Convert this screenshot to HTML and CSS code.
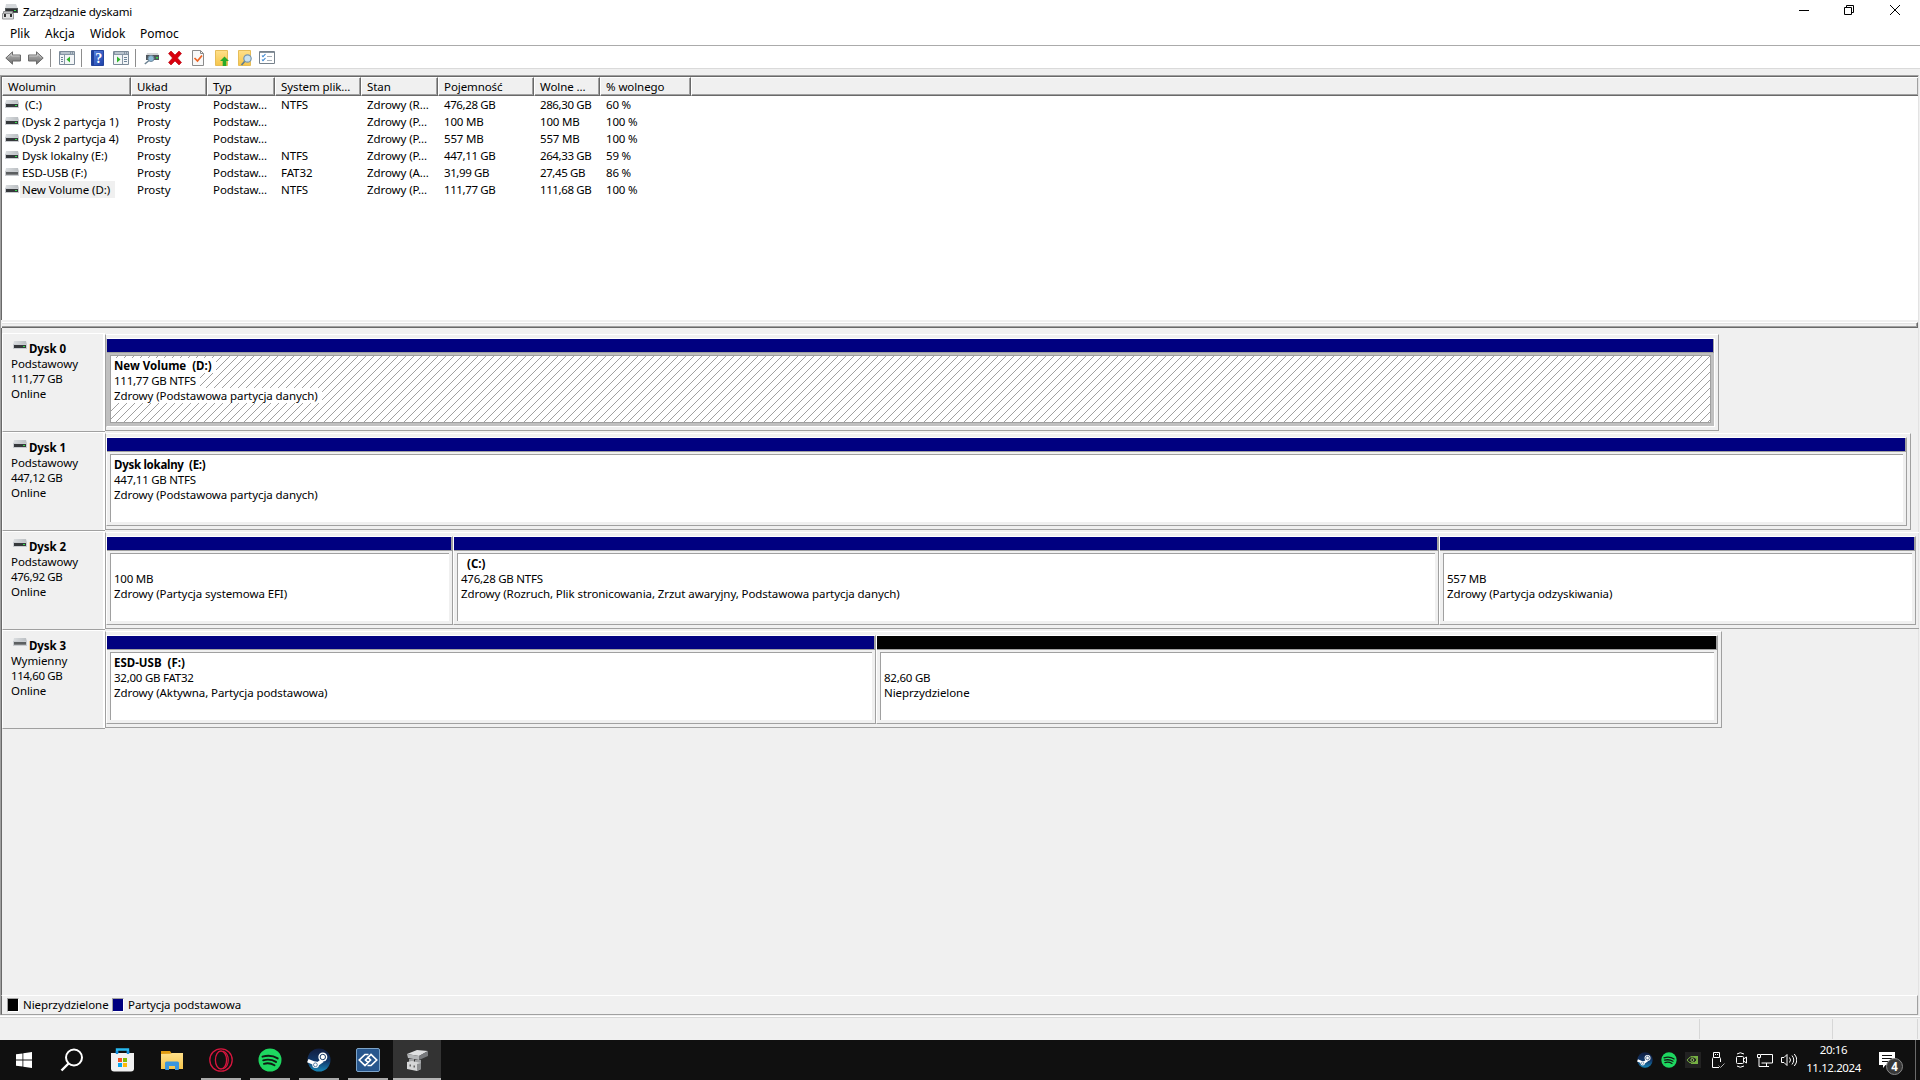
FILE: index.html
```html
<!DOCTYPE html>
<html lang="pl">
<head>
<meta charset="utf-8">
<title>Zarządzanie dyskami</title>
<link rel="stylesheet" href="styles.css">
</head>
<body>
<svg class="defs" width="0" height="0">
  <defs>
    <linearGradient id="gSteam" x1="0" y1="0" x2="0" y2="1"><stop offset="0" stop-color="#111d3f"/><stop offset=".55" stop-color="#11386a"/><stop offset="1" stop-color="#1787b8"/></linearGradient>
    <linearGradient id="gTop" x1="0" y1="0" x2="1" y2="0"><stop offset="0" stop-color="#dcdfe1"/><stop offset="1" stop-color="#b9bdc1"/></linearGradient>
    <linearGradient id="gArrow" x1="0" y1="0" x2="0" y2="1"><stop offset="0" stop-color="#b5b5b5"/><stop offset=".5" stop-color="#969696"/><stop offset="1" stop-color="#6e6e6e"/></linearGradient>
    <linearGradient id="gHelp" x1="0" y1="0" x2="1" y2="1"><stop offset="0" stop-color="#5b86e2"/><stop offset="1" stop-color="#1c3fa8"/></linearGradient>
    <linearGradient id="gFolder" x1="0" y1="0" x2="0" y2="1"><stop offset="0" stop-color="#ffe08a"/><stop offset="1" stop-color="#f6c54a"/></linearGradient>
  </defs>
  <symbol id="drive" viewBox="0 0 14 8"><path d="M1 0h12l1 4H0z" fill="url(#gTop)"/><path d="M0 3h14v5H0z" fill="#c9ccd0"/><path d="M1 4h12v3H1z" fill="#36393c"/><path d="M10 5h2v1h-2z" fill="#35e04d"/></symbol>
  <symbol id="usbdrive" viewBox="0 0 14 8"><path d="M1 0h12l1 4H0z" fill="url(#gTop)"/><path d="M0 3h14v5H0z" fill="#c9ccd0"/><path d="M1 4h12v3H1z" fill="#5c5f61"/><path d="M1 6h12v1H1z" fill="#7e8082"/></symbol>
  <symbol id="arrow" viewBox="0 0 16 14"><path d="M.8 7 7.5.8V4h8v6h-8v3.2z" fill="url(#gArrow)" stroke="#6b6b6b" stroke-linejoin="round"/><path d="M2.6 6.7 6.6 3v2h8" fill="none" stroke="#d0d0d0" stroke-width=".8"/></symbol>
  <symbol id="steam" viewBox="0 0 24 24"><circle cx="12" cy="12" r="11.5" fill="url(#gSteam)"/><path d="M.8 12.6 10 16.5l5.5-4" fill="none" stroke="#fff" stroke-width="3.6"/><circle cx="8.6" cy="16.8" r="3.3" fill="#fff"/><circle cx="8.4" cy="16.8" r="1.9" fill="none" stroke="#1a4e80" stroke-width=".7"/><circle cx="15.8" cy="9" r="4.5" fill="#fff"/><circle cx="15.8" cy="9" r="2.7" fill="none" stroke="#173b68" stroke-width="1"/></symbol>
  <symbol id="spotify" viewBox="0 0 24 24"><circle cx="12" cy="12" r="11.5" fill="#1ed760"/><path d="M4.5 8.7c5-1.5 11-.9 15.2 1.7M5.2 12.3c4.4-1.2 9-.7 12.8 1.6M5.9 15.8c3.7-.9 7.4-.5 10.6 1.4" fill="none" stroke="#101a13" stroke-width="1.9" stroke-linecap="round"/></symbol>
</svg>

<header class="titlebar">
  <svg class="app-icon" width="16" height="16" viewBox="0 0 16 16"><path d="M4 0h10l2 5H3z" fill="#d4d7da"/><path d="M3 4h13v5H3z" fill="#55595c"/><path d="M4 5h11v3H4z" fill="#303335"/><path d="M12 6h2v1h-2z" fill="#38df50"/><path d="M1.500 7.500h9V10.500h-9z" fill="#c5c6c8" stroke="#8c8e90"/><path d="M.5 9.500h11v5.500H.5z" fill="#e1e2e3" stroke="#97999b"/><path d="M2 10h2v3H2zM8 10h2v3H8z" fill="#303030"/></svg>
  <span class="title">Zarządzanie dyskami</span>
  <div class="window-buttons">
    <svg width="10" height="10" viewBox="0 0 10 10"><path d="M0 5.500h10" stroke="#000"/></svg>
    <svg width="10" height="10" viewBox="0 0 10 10" fill="none" stroke="#000"><path d="M.5 2.500h7v7h-7zM2.500 2.500v-2h7v7h-2"/></svg>
    <svg width="10" height="10" viewBox="0 0 10 10"><path d="m0 0 10 10M10 0 0 10" stroke="#000"/></svg>
  </div>
</header>
<nav class="menu"><span>Plik</span><span>Akcja</span><span>Widok</span><span>Pomoc</span></nav>

<div class="toolbar">
  <svg width="16" height="14"><use href="#arrow"/></svg>
  <svg class="flip" width="16" height="14"><use href="#arrow"/></svg>
  <i class="sep"></i>
  <svg width="16" height="14" viewBox="0 0 16 14"><path d="M.5.5h15v13H.5z" fill="#f4f6f8" stroke="#7c8a98"/><path d="M1 1h14v3H1z" fill="#8796a5"/><path d="M2 2h9M12 2h1M14 2h1" stroke="#e9eef3"/><path d="M5.500 4v9" stroke="#8796a5"/><path d="M2 6.500h2M2 8.500h2M2 10.500h2" stroke="#6d8499"/><path d="M11 5.500v6L7.500 8.500z" fill="#2fb52a"/></svg>
  <i class="sep"></i>
  <svg width="16" height="16" viewBox="0 0 16 16"><path d="M1.500.5h12v15h-12z" fill="url(#gHelp)" stroke="#23439c"/><path d="M2 1h2v14H2z" fill="#1d3f9c"/><text x="8.700" y="13.200" text-anchor="middle" class="help-mark">?</text></svg>
  <svg width="16" height="14" viewBox="0 0 16 14"><path d="M.5.5h15v13H.5z" fill="#f4f6f8" stroke="#7c8a98"/><path d="M1 1h14v3H1z" fill="#8796a5"/><path d="M2 2h9M12 2h1M14 2h1" stroke="#e9eef3"/><path d="M9.500 4v9" stroke="#8796a5"/><path d="M11 6.500h3M11 8.500h3M11 10.500h3" stroke="#6d8499"/><path d="M4 5.500v6l3.500-3z" fill="#2fb52a"/></svg>
  <i class="sep"></i>
  <svg width="16" height="14" viewBox="0 0 16 14"><path d="M3 2h11l1 3H2z" fill="#d1d4d7"/><path d="M2 4h13v5H2z" fill="#51575c"/><path d="M12 6h2v1.500h-2z" fill="#33dc48"/><path d="M5 9.500.8 13" stroke="#6c8191" stroke-width="1.500"/><circle cx="7" cy="7.500" r="3" fill="#8cbbd8" stroke="#70899c"/></svg>
  <svg width="16" height="16" viewBox="0 0 16 16"><path d="m1.500 3.500 2.500-2.500L8 5l4-4 2.500 2.500-4 4.500 4 4.500L12 15l-4-4-4 4-2.500-2.500 4-4.500z" fill="#d9000d" stroke="#b3000b" stroke-width=".6"/></svg>
  <svg width="16" height="16" viewBox="0 0 16 16"><path d="M2.500.5h8l3 3v12h-11z" fill="#f8f8f8" stroke="#8b8b8b"/><path d="M10.500.5v3h3" fill="none" stroke="#8b8b8b"/><path d="m4.500 8 3 3L12 5.500" fill="none" stroke="#ed6424" stroke-width="1.700"/></svg>
  <svg width="16" height="16" viewBox="0 0 16 16"><path d="M2.500.5h12v15h-12z" fill="url(#gFolder)" stroke="#e6bd58"/><path d="M11.500 6.500 16 11h-2.700v5h-3.600v-5H7z" fill="#28aa28"/></svg>
  <svg width="16" height="16" viewBox="0 0 16 16"><path d="M2.500.5h12v15h-12z" fill="url(#gFolder)" stroke="#e6bd58"/><path d="m9 11-3.500 4" stroke="#5b7b91" stroke-width="1.700"/><circle cx="11.500" cy="8.500" r="3.700" fill="#c9e2f0" stroke="#7896ab" stroke-width="1.200"/></svg>
  <svg width="16" height="13" viewBox="0 0 16 13"><path d="M.5.5h15v12H.5z" fill="#fff" stroke="#76818b"/><path d="M1 1h14v1H1z" fill="#8b959e"/><path d="m3 4.500 1 1.200L6.500 3M3 8.500l1 1.200L6.500 7" fill="none" stroke="#3984cf" stroke-width="1.100"/><path d="M8 5.500h5M8 9.500h5" stroke="#a7b0b8"/></svg>
</div>

<main class="pane">
  <section class="volumes">
    <div class="list-row list-head"><span>Wolumin</span><span>Układ</span><span>Typ</span><span>System plik...</span><span>Stan</span><span>Pojemność</span><span>Wolne ...</span><span>% wolnego</span><span></span></div>
    <div class="list-row"><span><svg width="14" height="8"><use href="#drive"/></svg><b class="name lead">(C:)</b></span><span>Prosty</span><span>Podstaw...</span><span>NTFS</span><span>Zdrowy (R...</span><span class="num">476,28 GB</span><span class="num">286,30 GB</span><span class="pct">60 %</span></div>
    <div class="list-row"><span><svg width="14" height="8"><use href="#drive"/></svg><b class="name">(Dysk 2 partycja 1)</b></span><span>Prosty</span><span>Podstaw...</span><span></span><span>Zdrowy (P...</span><span class="pct">100 MB</span><span class="pct">100 MB</span><span class="pct">100 %</span></div>
    <div class="list-row"><span><svg width="14" height="8"><use href="#drive"/></svg><b class="name">(Dysk 2 partycja 4)</b></span><span>Prosty</span><span>Podstaw...</span><span></span><span>Zdrowy (P...</span><span class="pct">557 MB</span><span class="pct">557 MB</span><span class="pct">100 %</span></div>
    <div class="list-row"><span><svg width="14" height="8"><use href="#drive"/></svg><b class="name">Dysk lokalny (E:)</b></span><span>Prosty</span><span>Podstaw...</span><span>NTFS</span><span>Zdrowy (P...</span><span class="num">447,11 GB</span><span class="num">264,33 GB</span><span class="pct">59 %</span></div>
    <div class="list-row"><span><svg width="14" height="8"><use href="#usbdrive"/></svg><b class="name">ESD-USB (F:)</b></span><span>Prosty</span><span>Podstaw...</span><span>FAT32</span><span>Zdrowy (A...</span><span class="num">31,99 GB</span><span class="num">27,45 GB</span><span class="pct">86 %</span></div>
    <div class="list-row"><span><svg width="14" height="8"><use href="#drive"/></svg><b class="name picked">New Volume (D:)</b></span><span>Prosty</span><span>Podstaw...</span><span>NTFS</span><span>Zdrowy (P...</span><span class="num">111,77 GB</span><span class="num">111,68 GB</span><span class="pct">100 %</span></div>
  </section>
  <div class="splitter"></div>

  <section class="disks">
    <div class="disk">
      <div class="disk-label"><p class="disk-name"><svg width="14" height="8"><use href="#drive"/></svg>Dysk 0</p><p>Podstawowy</p><p class="num">111,77 GB</p><p>Online</p></div>
      <div class="track">
        <div class="vol selected" style="width:1609px"><div class="bar"></div><div class="body"><p class="vol-name"><span>New Volume&nbsp; (D:)</span></p><p class="size"><span>111,77 GB NTFS</span></p><p><span>Zdrowy (Podstawowa partycja danych)</span></p></div></div>
      </div>
    </div>
    <div class="disk">
      <div class="disk-label"><p class="disk-name"><svg width="14" height="8"><use href="#drive"/></svg>Dysk 1</p><p>Podstawowy</p><p class="num">447,12 GB</p><p>Online</p></div>
      <div class="track">
        <div class="vol" style="width:1801px"><div class="bar"></div><div class="body"><p class="vol-name tight">Dysk lokalny&nbsp; (E:)</p><p class="size">447,11 GB NTFS</p><p>Zdrowy (Podstawowa partycja danych)</p></div></div>
      </div>
    </div>
    <div class="disk">
      <div class="disk-label"><p class="disk-name"><svg width="14" height="8"><use href="#drive"/></svg>Dysk 2</p><p>Podstawowy</p><p class="num">476,92 GB</p><p>Online</p></div>
      <div class="track full">
        <div class="vol" style="width:347px"><div class="bar"></div><div class="body"><p class="vol-name"></p><p class="size">100 MB</p><p>Zdrowy (Partycja systemowa EFI)</p></div></div>
        <div class="vol" style="width:986px"><div class="bar"></div><div class="body"><p class="vol-name">&nbsp; (C:)</p><p class="size">476,28 GB NTFS</p><p>Zdrowy (Rozruch, Plik stronicowania, Zrzut awaryjny, Podstawowa partycja danych)</p></div></div>
        <div class="vol" style="width:477px"><div class="bar"></div><div class="body"><p class="vol-name"></p><p class="size">557 MB</p><p>Zdrowy (Partycja odzyskiwania)</p></div></div>
      </div>
    </div>
    <div class="disk">
      <div class="disk-label"><p class="disk-name"><svg width="14" height="8"><use href="#usbdrive"/></svg>Dysk 3</p><p>Wymienny</p><p class="num">114,60 GB</p><p>Online</p></div>
      <div class="track">
        <div class="vol" style="width:770px"><div class="bar"></div><div class="body"><p class="vol-name">ESD-USB&nbsp; (F:)</p><p class="size">32,00 GB FAT32</p><p>Zdrowy (Aktywna, Partycja podstawowa)</p></div></div>
        <div class="vol free" style="width:842px"><div class="bar"></div><div class="body"><p class="vol-name"></p><p class="size">82,60 GB</p><p>Nieprzydzielone</p></div></div>
      </div>
    </div>
  </section>
  <footer class="legend"><i class="swatch black"></i><span class="legend-free">Nieprzydzielone</span><i class="swatch"></i><span>Partycja podstawowa</span></footer>
</main>
<div class="statusbar"><i></i><i></i><i></i></div>

<div class="taskbar">
  <div class="task"><svg width="16" height="16" viewBox="0 0 16 16"><path d="M0 2.300 6.500 1.400V7.600H0zM7.300 1.300 16 0v7.600H7.300zM0 8.400h6.500v6.200L0 13.700zM7.300 8.400H16V16l-8.700-1.200z" fill="#fff"/></svg></div>
  <div class="task"><svg width="24" height="24" viewBox="0 0 24 24" fill="none" stroke="#fff"><circle cx="14" cy="9.500" r="8" stroke-width="2"/><path d="M8.500 15.500 1.500 22.500" stroke-width="2.400"/></svg></div>
  <div class="task"><svg width="24" height="24" viewBox="0 0 24 24"><path d="M7 8V1.500h11V8" fill="none" stroke="#27b9f0" stroke-width="2.400"/><path d="M1 5h23v15.500a3 3 0 0 1-3 3H4a3 3 0 0 1-3-3z" fill="#f1f1f1"/><path d="M7 3v3M18 3v3" stroke="#1490df" stroke-width="2.400"/><path d="M8 10h4v4H8z" fill="#f35325"/><path d="M13 10h4v4h-4z" fill="#81bc06"/><path d="M8 15h4v4H8z" fill="#05a6f0"/><path d="M13 15h4v4h-4z" fill="#ffba08"/></svg></div>
  <div class="task"><svg width="24" height="24" viewBox="0 0 24 24"><path d="M1 3h9l2 3v6H1z" fill="#e09b10"/><path d="M1 6l9-.2L12 5h11v16H1z" fill="url(#gFolder)"/><path d="M5 21v-6q0-1.500 1.500-1.500h11Q19 13.500 19 15v6q0 1-1 1h-3v-4h-6v4H6q-1 0-1-1z" fill="#3a96dd"/></svg></div>
  <div class="task run"><svg width="24" height="24" viewBox="0 0 24 24" fill="none" stroke="#d6163e"><circle cx="12" cy="12" r="11.200" stroke-width="1.300"/><ellipse cx="12" cy="12" rx="5.600" ry="9" stroke-width="1.300"/><path d="M14 3c7 3 7 15 0 18" stroke-width="1.200"/></svg></div>
  <div class="task run"><svg width="24" height="24"><use href="#spotify"/></svg></div>
  <div class="task run"><svg width="24" height="24"><use href="#steam"/></svg></div>
  <div class="task run"><svg width="24" height="24" viewBox="0 0 24 24"><rect x=".5" y=".5" width="23" height="23" rx="1.500" fill="#27568d" stroke="#7da4c9"/><g fill="none" stroke="#fff" stroke-width="1.700"><path d="M12.500 6.500H9L3.300 12l5.700 5.500 5.500-5.500-2.500-2.500L9.500 12l3 3"/><path d="M11.500 17.500H15l5.700-5.500L15 6.500 11.500 10"/></g></svg></div>
  <div class="task run active"><svg width="24" height="24" viewBox="0 0 24 24"><path d="M2 6 12 2l11 1-9 5z" fill="#dfe0e1"/><path d="m2 6 12 2v4L3 10z" fill="#b4b6b8"/><path d="m14 8 9-5v5l-9 4z" fill="#77797c"/><path d="M4 11h5v3H4zM10 12h6v3h-6z" fill="#9fa1a3"/><path d="m2 14 5-1 9 2v6l-4 2-10-2z" fill="#d5d6d7"/><path d="m12 16 4-1v6l-4 2z" fill="#8e9092"/><path d="M4.500 16.500H6v2H4.500zM8.500 17.500H10v2H8.500z" fill="#666"/></svg></div>

  <div class="tray">
    <svg width="16" height="16"><use href="#steam"/></svg>
    <svg width="16" height="16"><use href="#spotify"/></svg>
    <svg width="16" height="16" viewBox="0 0 16 16"><path d="M0 0h16v16H0z" fill="#222"/><path d="M6 4h7v8H6z" fill="#76b043"/><path d="M2 8q3-4.500 7-3 2 1 3 3-2 3-5 3-3.500 0-5-3z" fill="#222" stroke="#76b043"/><circle cx="7.300" cy="8" r="1.500" fill="none" stroke="#91c45d"/></svg>
    <svg width="16" height="16" viewBox="0 0 16 16" fill="none" stroke="#fff"><path d="M4.500 5V.5h6V5M6 2.500h1M8 2.500h1M10 15.500H3.500v-9q0-1 1-1h6q1 0 1 1V10"/><path d="m9.500 13.500 2 2 4-4" stroke="#aaa"/></svg>
    <svg width="16" height="16" viewBox="0 0 16 16" fill="none" stroke="#fff"><path d="M4.500 4.500h5q1 0 1 1v5q0 1-1 1h-5q-1 0-1-1v-5q0-1 1-1zM10.500 7l3-2v6l-3-2M4 2q3-2.500 7 0M4 14q3 2.500 7 0"/></svg>
    <svg width="16" height="16" viewBox="0 0 16 16" fill="none" stroke="#fff"><path d="M4 2.500h11.500v8.500H4.500M.5 2.500h3v3h-3zM2 6v8.500h10M9.500 11v3.500"/></svg>
    <svg width="16" height="16" viewBox="0 0 16 16" fill="none" stroke="#fff"><path d="M.5 5.500H3l3-3v11l-3-3H.5zM8.500 5.500q2 2.500 0 5M11 3.500q3.500 4.500 0 9M13.300 2q5 6 0 12"/></svg>
  </div>
  <div class="clock"><span>20:16</span><span>11.12.2024</span></div>
  <div class="notify"><svg width="16" height="16" viewBox="0 0 16 16"><path d="M0 0h16v13H6.500L4 16v-3H0z" fill="#fff"/><path d="M3 3.500h10M3 6.500h10M3 9.500h7" stroke="#101010"/></svg><span class="badge">4</span></div>
  <i class="show-desktop"></i>
</div>
</body>
</html>
```
FILE: styles.css
```css
* { box-sizing: border-box; }

body {
  margin: 0;
  width: 1920px;
  height: 1080px;
  overflow: hidden;
  display: flex;
  flex-direction: column;
  background: #f0f0f0;
  color: #000;
  font: 11.5px/15px "Noto Sans", "Open Sans", sans-serif;
  letter-spacing: -0.08px;
  white-space: nowrap;
}

p { margin: 0; height: 15px; }
svg { display: block; flex: none; }

/* Title and menu */
.titlebar { display: flex; height: 22px; padding-left: 2px; background: #fff; flex: none; }
.app-icon { margin-top: 4px; }
.title { margin: 4px 0 0 5px; letter-spacing: -0.2px; }
.window-buttons { display: grid; grid-template-columns: 45px 46px 10px; margin: 5px 20px 0 auto; }
.menu {
  display: grid;
  grid-template-columns: 35px 45px 50px auto;
  height: 23px;
  padding: 4px 0 0 10px;
  background: #fff;
  font-size: 12px;
  letter-spacing: 0;
  flex: none;
}

.toolbar {
  display: flex;
  align-items: center;
  gap: 7px;
  height: 24px;
  padding: 1px 0 0 5px;
  background: #fff;
  border-top: 1px solid #ababab;
  border-bottom: 1px solid #dadada;
  flex: none;
}
.sep { width: 1px; height: 18px; margin: 0 1px 0 -1px; background: #8d8d8d; }
.flip { transform: scaleX(-1); }
.help-mark { font: bold 14px "Liberation Serif", serif; fill: #fff; }

/* Main pane */
.pane {
  display: flex;
  flex-direction: column;
  width: 1919px;
  height: 940px;
  margin-top: 6px;
  border-left: 1px solid #a0a0a0;
  border-top: 1px solid #a0a0a0;
  border-right: 1px solid #e3e3e3;
  flex: none;
}
.volumes {
  height: 244px;
  background: #fff;
  border-left: 1px solid #696969;
  border-top: 1px solid #696969;
  flex: none;
}
.list-row {
  display: grid;
  grid-template-columns: 129px 76px 68px 86px 77px 96px 66px 91px 1fr;
  height: 17px;
  line-height: 17px;
}
.list-row > span { display: flex; align-items: center; padding-left: 6px; }
.list-row:not(.list-head) > span:first-child { padding-left: 3px; }
.list-row svg { margin: -1px 1px 0 0; }
.num { letter-spacing: -0.4px; }
.pct { letter-spacing: -0.2px; }
.size { letter-spacing: -0.25px; }
.list-head { height: 19px; }
.list-head > span {
  background: #f0f0f0;
  border-top: 1px solid #fff;
  border-left: 1px solid #fff;
  border-right: 1px solid #696969;
  border-bottom: 1px solid #696969;
  box-shadow: inset -1px -1px #a0a0a0;
  padding-left: 5px;
}
.list-head > span:last-child { border-right: 0; }
.name { font-weight: normal; padding: 0 5px 0 2px; }
.lead { padding-left: 5px; }
.picked { background: #f0f0f0; }

.splitter {
  height: 6px;
  margin: 2px 0 0 1px;
  border-top: 1px solid #fff;
  border-right: 1px solid #696969;
  border-bottom: 1px solid #696969;
  box-shadow: inset -1px -1px #a0a0a0, inset 0 1px #e3e3e3;
  flex: none;
}

/* Disk rows */
.disks { flex: 1; padding-top: 5px; border-left: 1px solid #696969; }
.disk { display: flex; height: 99px; }
.disk-label {
  width: 103px;
  padding: 7px 0 0 8px;
  border-top: 1px solid #fff;
  border-left: 1px solid #fff;
  border-bottom: 1px solid #a0a0a0;
  box-shadow: inset -2px 0 #fff;
  flex: none;
}
.disk-name { display: flex; gap: 2px; padding-left: 2px; font-weight: bold; }
.track {
  display: flex;
  height: 97px;
  margin-top: 1px;
  padding: 3px 3px 0 0;
  border-top: 1px solid #fff;
  border-left: 1px solid #a0a0a0;
  border-right: 1px solid #a0a0a0;
  border-bottom: 1px solid #a0a0a0;
}
.track.full { flex: 1; border-right: 0; }
.vol {
  display: flex;
  flex-direction: column;
  height: 89px;
  border-top: 1px solid #fff;
  border-left: 1px solid #fff;
  border-right: 1px solid #a0a0a0;
  border-bottom: 1px solid #a0a0a0;
  flex: none;
}
.bar { height: 14px; background: #000080; border-right: 1px solid #a0a0a0; border-bottom: 1px solid #a0a0a0; }
.free .bar { background: #000; }
.body {
  flex: 1;
  margin: 2px 3px 3px;
  padding: 2px 0 0 3px;
  background: #fff;
  border-top: 1px solid #a0a0a0;
  border-left: 1px solid #a0a0a0;
}
.vol-name { font-weight: bold; letter-spacing: 0; }
.tight { letter-spacing: -0.28px; }
.selected { background: #c0c0c0; border-right-color: #fff; border-bottom-color: #fff; border-left-color: #c0c0c0; }
/* Diagonal hatch: one pixel per row of an 8x8 tile */
.selected .body {
  padding-left: 0;
  border: 1px solid #a0a0a0;
  background: #fff url("data:image/svg+xml,%3Csvg xmlns='http://www.w3.org/2000/svg' width='8' height='8'%3E%3Cpath fill='%23a0a0a0' d='M6 0h1v1H6zM5 1h1v1H5zM4 2h1v1H4zM3 3h1v1H3zM2 4h1v1H2zM1 5h1v1H1zM0 6h1v1H0zM7 7h1v1H7z'/%3E%3C/svg%3E");
}
.selected p span { display: inline-block; height: 15px; padding: 0 4px 0 3px; background: #fff; }

.legend {
  display: flex;
  height: 20px;
  padding: 2px 0 0 5px;
  border-left: 1px solid #696969;
  border-top: 1px solid #fff;
  border-right: 1px solid #a0a0a0;
  border-bottom: 1px solid #a0a0a0;
  line-height: 13px;
  flex: none;
}
.swatch { width: 12px; height: 14px; margin-right: 4px; background: #000080; border: 1px solid #a0a0a0; border-right-color: #fff; border-bottom-color: #fff; }
.swatch.black { background: #000; }
.legend-free { width: 85px; margin-right: 4px; }

.statusbar {
  display: flex;
  justify-content: flex-end;
  height: 24px;
  margin-top: 1px;
  padding: 1px 2px 1px 0;
  border-top: 1px solid #fff;
  box-shadow: inset 0 1px #d7d7d7;
  flex: none;
}
.statusbar i { margin-top: 1px; border-right: 1px solid #d7d7d7; width: 85px; }
.statusbar i:nth-child(2) { width: 133px; }

/* Taskbar */
.taskbar { display: flex; height: 40px; background: #101010; color: #fff; flex: none; }
.task { width: 48px; margin-right: 1px; display: flex; align-items: center; justify-content: center; }
.task:nth-child(1) { margin-right: 0; }
.task:nth-child(2), .task:nth-child(3) { margin-right: 2px; }
.run { box-shadow: inset 4px 0 #101010, inset -4px 0 #101010, inset 0 -2px #aaa; }
.run.active { background: #333; box-shadow: inset 0 -2px #b5b5b5; margin-right: 0; }
.tray { display: flex; align-items: center; gap: 8px; margin-left: auto; }
.clock {
  display: flex;
  flex-direction: column;
  align-items: center;
  width: 74px;
  padding: 1px 1px 0 0;
  line-height: 18px;
  letter-spacing: -0.42px;
}
.notify { position: relative; width: 44px; padding: 12px 0 0 8px; }
.badge {
  position: absolute;
  left: 15px;
  top: 18px;
  width: 17px;
  height: 17px;
  border: 1px solid #888;
  border-radius: 50%;
  background: #383838;
  font-weight: bold;
  text-align: center;
}
.show-desktop { width: 5px; border-left: 1px solid #6a6a6a; }
```
